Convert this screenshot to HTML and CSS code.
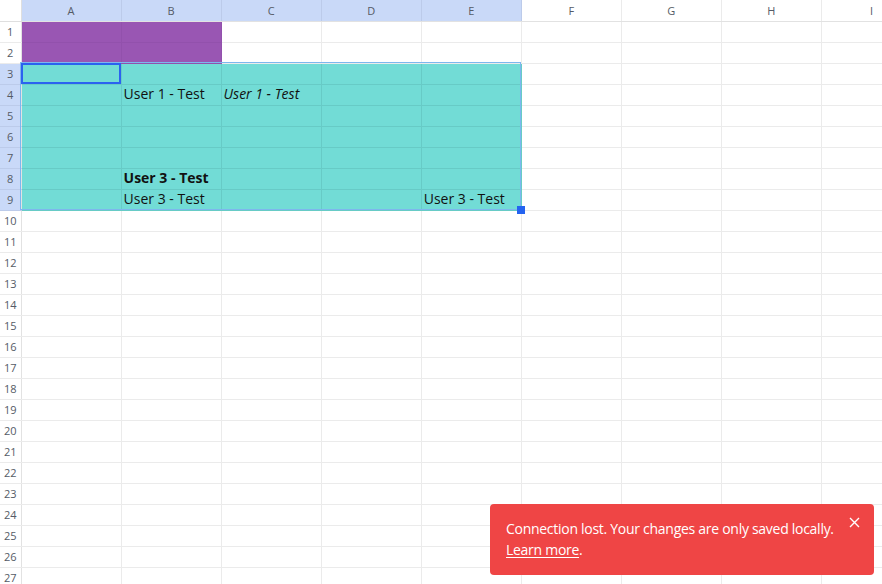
FILE: index.html
```html
<!DOCTYPE html>
<html>
<head>
<meta charset="utf-8">
<link rel="stylesheet" href="styles.css">
</head>
<body>
<div class="sheet">
  <table class="grid">
    <colgroup>
      <col class="c-head"><col class="c"><col class="c"><col class="c"><col class="c"><col class="c"><col class="c"><col class="c"><col class="c"><col class="c">
    </colgroup>
    <thead>
      <tr>
        <th class="corner"></th>
        <th class="col-h sel">A</th><th class="col-h sel">B</th><th class="col-h sel">C</th><th class="col-h sel">D</th><th class="col-h sel">E</th>
        <th class="col-h">F</th><th class="col-h">G</th><th class="col-h">H</th><th class="col-h">I</th>
      </tr>
    </thead>
    <tbody>
      <tr><th class="row-h">1</th><td class="purple"></td><td class="purple"></td><td></td><td></td><td></td><td></td><td></td><td></td><td></td></tr>
      <tr><th class="row-h">2</th><td class="purple"></td><td class="purple"></td><td></td><td></td><td></td><td></td><td></td><td></td><td></td></tr>
      <tr><th class="row-h sel">3</th><td class="teal"></td><td class="teal"></td><td class="teal"></td><td class="teal"></td><td class="teal"></td><td></td><td></td><td></td><td></td></tr>
      <tr><th class="row-h sel">4</th><td class="teal"></td><td class="teal">User 1 - Test</td><td class="teal italic">User 1 - Test</td><td class="teal"></td><td class="teal"></td><td></td><td></td><td></td><td></td></tr>
      <tr><th class="row-h sel">5</th><td class="teal"></td><td class="teal"></td><td class="teal"></td><td class="teal"></td><td class="teal"></td><td></td><td></td><td></td><td></td></tr>
      <tr><th class="row-h sel">6</th><td class="teal"></td><td class="teal"></td><td class="teal"></td><td class="teal"></td><td class="teal"></td><td></td><td></td><td></td><td></td></tr>
      <tr><th class="row-h sel">7</th><td class="teal"></td><td class="teal"></td><td class="teal"></td><td class="teal"></td><td class="teal"></td><td></td><td></td><td></td><td></td></tr>
      <tr><th class="row-h sel">8</th><td class="teal"></td><td class="teal bold">User 3 - Test</td><td class="teal"></td><td class="teal"></td><td class="teal"></td><td></td><td></td><td></td><td></td></tr>
      <tr><th class="row-h sel">9</th><td class="teal"></td><td class="teal">User 3 - Test</td><td class="teal"></td><td class="teal"></td><td class="teal">User 3 - Test</td><td></td><td></td><td></td><td></td></tr>
      <tr><th class="row-h">10</th><td></td><td></td><td></td><td></td><td></td><td></td><td></td><td></td><td></td></tr>
      <tr><th class="row-h">11</th><td></td><td></td><td></td><td></td><td></td><td></td><td></td><td></td><td></td></tr>
      <tr><th class="row-h">12</th><td></td><td></td><td></td><td></td><td></td><td></td><td></td><td></td><td></td></tr>
      <tr><th class="row-h">13</th><td></td><td></td><td></td><td></td><td></td><td></td><td></td><td></td><td></td></tr>
      <tr><th class="row-h">14</th><td></td><td></td><td></td><td></td><td></td><td></td><td></td><td></td><td></td></tr>
      <tr><th class="row-h">15</th><td></td><td></td><td></td><td></td><td></td><td></td><td></td><td></td><td></td></tr>
      <tr><th class="row-h">16</th><td></td><td></td><td></td><td></td><td></td><td></td><td></td><td></td><td></td></tr>
      <tr><th class="row-h">17</th><td></td><td></td><td></td><td></td><td></td><td></td><td></td><td></td><td></td></tr>
      <tr><th class="row-h">18</th><td></td><td></td><td></td><td></td><td></td><td></td><td></td><td></td><td></td></tr>
      <tr><th class="row-h">19</th><td></td><td></td><td></td><td></td><td></td><td></td><td></td><td></td><td></td></tr>
      <tr><th class="row-h">20</th><td></td><td></td><td></td><td></td><td></td><td></td><td></td><td></td><td></td></tr>
      <tr><th class="row-h">21</th><td></td><td></td><td></td><td></td><td></td><td></td><td></td><td></td><td></td></tr>
      <tr><th class="row-h">22</th><td></td><td></td><td></td><td></td><td></td><td></td><td></td><td></td><td></td></tr>
      <tr><th class="row-h">23</th><td></td><td></td><td></td><td></td><td></td><td></td><td></td><td></td><td></td></tr>
      <tr><th class="row-h">24</th><td></td><td></td><td></td><td></td><td></td><td></td><td></td><td></td><td></td></tr>
      <tr><th class="row-h">25</th><td></td><td></td><td></td><td></td><td></td><td></td><td></td><td></td><td></td></tr>
      <tr><th class="row-h">26</th><td></td><td></td><td></td><td></td><td></td><td></td><td></td><td></td><td></td></tr>
      <tr><th class="row-h">27</th><td></td><td></td><td></td><td></td><td></td><td></td><td></td><td></td><td></td></tr>
    </tbody>
  </table>
  <div class="range"></div>
  <div class="active"></div>
  <div class="handle"></div>
</div>

<div class="toast">
  <p class="toast-text">Connection lost. Your changes are only saved locally.<br><a href="#" class="toast-link">Learn more</a>.</p>
  <button class="toast-close" aria-label="Close">
    <svg width="11" height="11" viewBox="0 0 11 11"><path d="M1 1 L10 10 M10 1 L1 10" stroke="#fff" stroke-width="1.4" fill="none"/></svg>
  </button>
</div>
</body>
</html>
```

FILE: styles.css
```css
html, body {
  margin: 0;
  padding: 0;
  background: #fff;
  overflow: hidden;
  width: 882px;
  height: 584px;
}

body {
  font-family: "Open Sans", "Noto Sans", sans-serif;
  position: relative;
}

.sheet {
  position: relative;
  width: 882px;
  height: 584px;
  overflow: hidden;
}

.grid {
  border-collapse: collapse;
  table-layout: fixed;
  width: 922px;
}

.c-head { width: 21px; }
.c { width: 100px; }

.grid th,
.grid td {
  height: 21px;
  padding: 0;
  box-sizing: border-box;
  border: 1px solid #ebebeb;
  white-space: nowrap;
  overflow: hidden;
}

.grid tr > :first-child { border-left: none; }
.grid thead th { border-top: none; }

.corner {
  background: #fff;
  border-right: 1px solid #dfdfdf !important;
  border-bottom: 1px solid #dfdfdf !important;
}

.col-h {
  font-size: 11px;
  font-weight: 400;
  color: #555b66;
  text-align: center;
  background: #fff;
  border-bottom: 1px solid #e2e2e2 !important;
}

.row-h {
  font-size: 11px;
  font-weight: 400;
  color: #555b66;
  text-align: center;
  background: #fff;
  border-right: 1px solid #e2e2e2 !important;
}

.col-h.sel,
.row-h.sel {
  background: #c9d9f8;
  border-color: #bccbea;
}

.grid td {
  font-size: 14px;
  color: #111;
  padding: 0 0 3px 2px;
  vertical-align: middle;
  line-height: 17px;
}

.grid td.purple {
  background: #9956b3;
  border-color: #9251ac;
}

.grid td.teal {
  background: #72dcd6;
  border-color: #67cbc6;
}

.italic { font-style: italic; }
.bold { font-weight: 700; }

.range {
  position: absolute;
  left: 20px;
  top: 62px;
  width: 501px;
  height: 148px;
  border: 1px solid #7db7ee;
  box-sizing: border-box;
  pointer-events: none;
}

.active {
  position: absolute;
  left: 21px;
  top: 63px;
  width: 100px;
  height: 21px;
  border: 2px solid #2b62f0;
  box-sizing: border-box;
}

.handle {
  position: absolute;
  left: 517px;
  top: 206px;
  width: 8px;
  height: 8px;
  background: #2463f0;
}

.toast {
  position: absolute;
  left: 490px;
  top: 504px;
  width: 384px;
  height: 71px;
  box-sizing: border-box;
  background: #ef4545;
  border-radius: 4px;
  padding: 14px 16px 0 16px;
  color: #fff;
}

.toast-text {
  margin: 0;
  font-size: 14px;
  line-height: 21px;
  letter-spacing: -0.28px;
  white-space: nowrap;
}

.toast-link {
  color: #fff;
  text-decoration: underline;
  text-underline-offset: 2px;
}

.toast-close {
  position: absolute;
  top: 11px;
  right: 12px;
  width: 15px;
  height: 15px;
  padding: 0;
  border: none;
  background: transparent;
  display: flex;
  align-items: center;
  justify-content: center;
}
```
